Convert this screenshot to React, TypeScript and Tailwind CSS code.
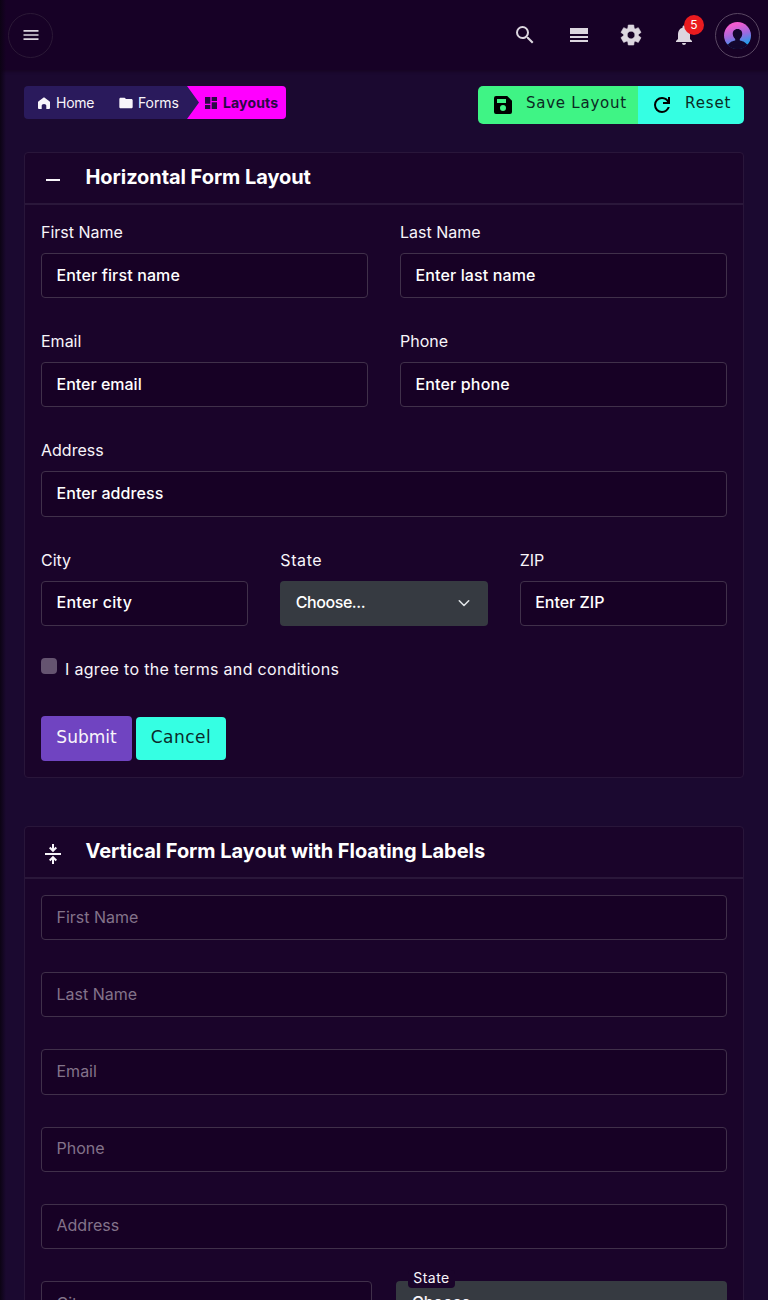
import React from "react";
import { MdMenu, MdSearch, MdNotifications, MdFolder, MdDashboard, MdRemove } from "react-icons/md";

const inputBox =
  "block h-[45.2px] w-full rounded-[4px] border border-[#40304a] bg-[#170125] px-[14.5px] pb-[2px] text-[16px] leading-6 outline-none";

function Field({ label, placeholder, spacing = "" }: { label: string; placeholder: string; spacing?: string }) {
  return (
    <label className="block">
      <span className="mb-[9px] -mt-px block h-6 text-[16px] leading-6">{label}</span>
      <input className={`${inputBox} font-medium placeholder:text-white placeholder:opacity-100 ${spacing}`} placeholder={placeholder} />
    </label>
  );
}

function Floating({ label }: { label: string }) {
  return <input aria-label={label} placeholder={label} className={`${inputBox} placeholder:text-[#83738a] placeholder:opacity-100`} />;
}

function Card({ icon, title, titleClass, children, className = "" }: { icon: React.ReactNode; title: string; titleClass: string; children: React.ReactNode; className?: string }) {
  return (
    <section className={`rounded-[4px] border border-[#29163a] bg-[#1a042a] ${className}`}>
      <header className="flex h-[52px] items-center border-b-2 border-[#2a173a] pl-4">
        <span className="mt-[3px] w-[44.5px]">{icon}</span>
        <h2 className={`-mt-[2px] text-[20px] font-bold leading-6 text-white ${titleClass}`}>{title}</h2>
      </header>
      {children}
    </section>
  );
}

function SettingsIcon({ className }: { className: string }) {
  return (
    <svg viewBox="0 -960 960 960" className={className} fill="currentColor" stroke="currentColor" strokeWidth="24" strokeLinejoin="round">
      <path d="m370-80-16-128q-13-5-24.5-12T307-235l-119 50L78-375l103-78q-1-7-1-13.5v-27q0-6.5 1-13.5L78-585l110-190 119 50q11-8 23-15t24-12l16-128h220l16 128q13 5 24.5 12t22.5 15l119-50 110 190-103 78q1 7 1 13.5v27q0 6.5-2 13.5l103 78-110 190-118-50q-11 8-23 15t-24 12L590-80H370Zm112-245q64 0 109-45t45-109q0-64-45-109t-109-45q-64 0-109 45t-45 109q0 64 45 109t109 45Z" />
    </svg>
  );
}

function CompressIcon() {
  return (
    <svg viewBox="0 0 24 24" className="h-6 w-6" fill="none" stroke="currentColor" strokeWidth="2">
      <path d="M4 12H20M12 2V8M8.7 5.5L12 8.8L15.3 5.5M12 22V16M8.7 18.5L12 15.2L15.3 18.5" />
    </svg>
  );
}

function RefreshIcon() {
  return (
    <svg viewBox="0 -960 960 960" className="h-6 w-6" fill="currentColor">
      <path d="M480-160q-134 0-227-93t-93-227q0-134 93-227t227-93q69 0 132 28.5T720-690v-110h80v280H520v-80h168q-32-56-87.5-88T480-720q-100 0-170 70t-70 170q0 100 70 170t170 70q77 0 139-44t87-116h84q-28 106-114 173t-196 67Z" />
    </svg>
  );
}

function SaveIcon() {
  return (
    <svg viewBox="0 0 24 24" className="h-6 w-6" fill="currentColor" fillRule="evenodd">
      <path d="M5 3H16.2L21 7.8V19A2 2 0 0 1 19 21H5A2 2 0 0 1 3 19V5A2 2 0 0 1 5 3ZM6 6V10H15V6ZM12 12A3 3 0 1 0 12 18A3 3 0 1 0 12 12Z" />
    </svg>
  );
}

function Avatar() {
  return (
    <svg viewBox="0 0 27 27" className="h-[27px] w-[27px]">
      <defs>
        <linearGradient id="avatarBg" x1="0.35" y1="0" x2="0.65" y2="1">
          <stop offset="0.1" stopColor="#f35bcf" />
          <stop offset="0.5" stopColor="#9a6be0" />
          <stop offset="0.85" stopColor="#249dea" />
        </linearGradient>
        <clipPath id="avatarClip"><circle cx="13.5" cy="13.5" r="13.5" /></clipPath>
      </defs>
      <g clipPath="url(#avatarClip)">
        <rect width="27" height="27" fill="url(#avatarBg)" />
        <path d="M13.5 7C10.3 7 8.5 9.3 8.8 12.3C9 14.5 10 16 11.2 17V18.5C8 19.2 4.5 20.5 3.8 24V27H23.5V24C22.7 20.5 19 19.2 15.8 18.5V17C17 16 18 14.5 18.2 12.3C18.5 9.3 16.7 7 13.5 7Z" fill="#13072e" />
        <path d="M0 21C5 24 22 24 27 21V27H0Z" fill="#13072e" />
      </g>
    </svg>
  );
}

export default function App() {
  return (
    <div className="relative h-[1300px] w-[768px] overflow-hidden bg-[#1b0930] font-['Inter',sans-serif] text-[#f8f5fa]">
      <nav className="flex h-[70px] items-center bg-[#170126] pl-2 pr-2 text-[#dcd6df] shadow-[0_1px_3px_#15041f]">
        <button className="flex h-[45px] w-[45px] items-center justify-center rounded-full border border-[#2b1936]">
          <MdMenu className="h-5 w-5" />
        </button>
        <div className="ml-auto flex items-center">
          <MdSearch className="mr-[29.5px] h-6 w-6" />
          <svg viewBox="0 0 24 24" className="mr-[28.5px] h-6 w-6" fill="currentColor">
            <path d="M3 5H21V11H3ZM3 13H21V15H3ZM3 17H21V19H3Z" />
          </svg>
          <SettingsIcon className="mr-[29px] h-6 w-6" />
          <span className="relative mr-[19px] h-6 w-6">
            <MdNotifications className="h-6 w-6" />
            <span className="absolute left-[12px] top-[-8px] flex h-5 w-5 items-center justify-center rounded-full bg-[#ea1b1f] text-[12px] leading-none text-white">5</span>
          </span>
          <span className="flex h-[45px] w-[45px] items-center justify-center rounded-full border border-[#594762]">
            <Avatar />
          </span>
        </div>
      </nav>

      <div className="flex items-start justify-between px-6 pt-4">
        <ol className="flex h-[33px] w-[262px] overflow-hidden rounded-[4px] bg-[#2a1a5c] text-[14px]">
          <li className="flex w-[82px] items-center pl-3">
            <svg viewBox="0 0 16 16" className="mr-1 h-4 w-4" fill="currentColor">
              <path d="M8 2.2L13.4 6.2Q14 6.7 14 7.5V13Q14 14 13 14H10.3V10.5Q10.3 8.9 8 8.9Q5.7 8.9 5.7 10.5V14H3Q2 14 2 13V7.5Q2 6.7 2.6 6.2Z" />
            </svg>
            <span className="-mt-px tracking-[-0.25px]">Home</span>
          </li>
          <li className="flex w-[81px] items-center pl-3">
            <MdFolder className="mr-1 h-4 w-4" />
            <span className="-mt-px tracking-[-0.1px]">Forms</span>
          </li>
          <li className="flex flex-1 items-center bg-[#ff00ff] pl-[16px] font-bold text-[#2a0845] [clip-path:polygon(0_0,100%_0,100%_100%,0_100%,12px_50%)]">
            <MdDashboard className="mr-1 h-4 w-4" />
            <span className="-mt-px tracking-[0.15px]">Layouts</span>
          </li>
        </ol>
        <div className="flex h-[38px] overflow-hidden rounded-[5px] font-['DejaVu_Sans',sans-serif] text-[15px] text-[#0b2a23]">
          <button className="flex w-[160px] items-center bg-[#3ff485] pl-[13px]">
            <span className="text-black"><SaveIcon /></span>
            <span className="-mt-[3px] ml-[11px] whitespace-nowrap tracking-[0.75px]">Save Layout</span>
          </button>
          <button className="flex w-[106px] items-center bg-[#35ffe3] pl-3">
            <span className="text-black"><RefreshIcon /></span>
            <span className="-mt-[3px] ml-[11px] tracking-[0.9px]">Reset</span>
          </button>
        </div>
      </div>

      <main className="px-6 pt-7">
        <Card icon={<MdRemove className="h-6 w-6" />} title="Horizontal Form Layout" titleClass="tracking-[-0.07px]" className="h-[626px]">
          <div className="px-4 pt-4">
            <div className="grid grid-cols-2 gap-x-8 gap-y-8">
              <Field label="First Name" placeholder="Enter first name" spacing="tracking-[0.13px]" />
              <Field label="Last Name" placeholder="Enter last name" spacing="tracking-[0.13px]" />
              <Field label="Email" placeholder="Enter email" />
              <Field label="Phone" placeholder="Enter phone" spacing="tracking-[0.15px]" />
              <div className="col-span-2"><Field label="Address" placeholder="Enter address" spacing="tracking-[0.08px]" /></div>
            </div>
            <div className="mt-8 grid grid-cols-3 gap-x-8">
              <Field label="City" placeholder="Enter city" spacing="tracking-[0.3px]" />
              <div>
                <span className="-mt-px mb-[9px] block h-6 text-[16px] leading-6 tracking-[0.6px]">State</span>
                <button className="flex h-[45.2px] w-full items-center justify-between rounded-[4px] bg-[#363a41] pl-[15.5px] pr-4 text-[16px] font-medium tracking-[-0.45px]">
                  <span className="-mt-[2px] text-white">Choose...</span>
                  <svg viewBox="0 0 16 16" className="h-4 w-4" fill="none" stroke="#dfe3e6" strokeWidth="1.6" strokeLinecap="round" strokeLinejoin="round">
                    <path d="M3.3 5.8L8 10.5L12.7 5.8" />
                  </svg>
                </button>
              </div>
              <Field label="ZIP" placeholder="Enter ZIP" />
            </div>
            <div className="mt-[31px] flex h-6">
              <span className="mt-[1px] h-4 w-4 rounded-[4px] bg-[#655470]" />
              <span className="ml-2 text-[16px] leading-6 tracking-[0.32px]">I agree to the terms and conditions</span>
            </div>
            <div className="mt-[35px] flex items-center gap-1 font-['DejaVu_Sans',sans-serif] text-[17px]">
              <button className="h-[45px] w-[91px] rounded-[4px] bg-[#7044c1] pb-[2px]">Submit</button>
              <button className="h-[43px] w-[90px] rounded-[4px] bg-[#35ffe3] pb-[2px] tracking-[0.5px] text-[#0b2a2b]">Cancel</button>
            </div>
          </div>
        </Card>

        <Card icon={<CompressIcon />} title="Vertical Form Layout with Floating Labels" titleClass="tracking-[-0.04px]" className="mt-12 h-[626px]">
          <div className="flex flex-col gap-8 px-4 pt-4">
            <Floating label="First Name" />
            <Floating label="Last Name" />
            <Floating label="Email" />
            <Floating label="Phone" />
            <Floating label="Address" />
            <div className="grid grid-cols-2 gap-x-6">
              <Floating label="City" />
              <div className="relative h-[45.2px] rounded-[4px] bg-[#363a41] px-4 text-[16px] font-medium leading-[43px]">
                <span className="absolute left-3 top-[-11px] flex h-[18px] w-[47px] items-center justify-center rounded-[4px] bg-[#1a042a] text-[14px] font-normal leading-[16px] tracking-[0.5px]"><span className="-mt-[2px]">State</span></span>
                Choose...
              </div>
            </div>
          </div>
        </Card>
      </main>
      <div className="pointer-events-none absolute inset-y-0 left-0 w-[6px] bg-gradient-to-r from-[#0c0314] to-transparent" />
    </div>
  );
}
